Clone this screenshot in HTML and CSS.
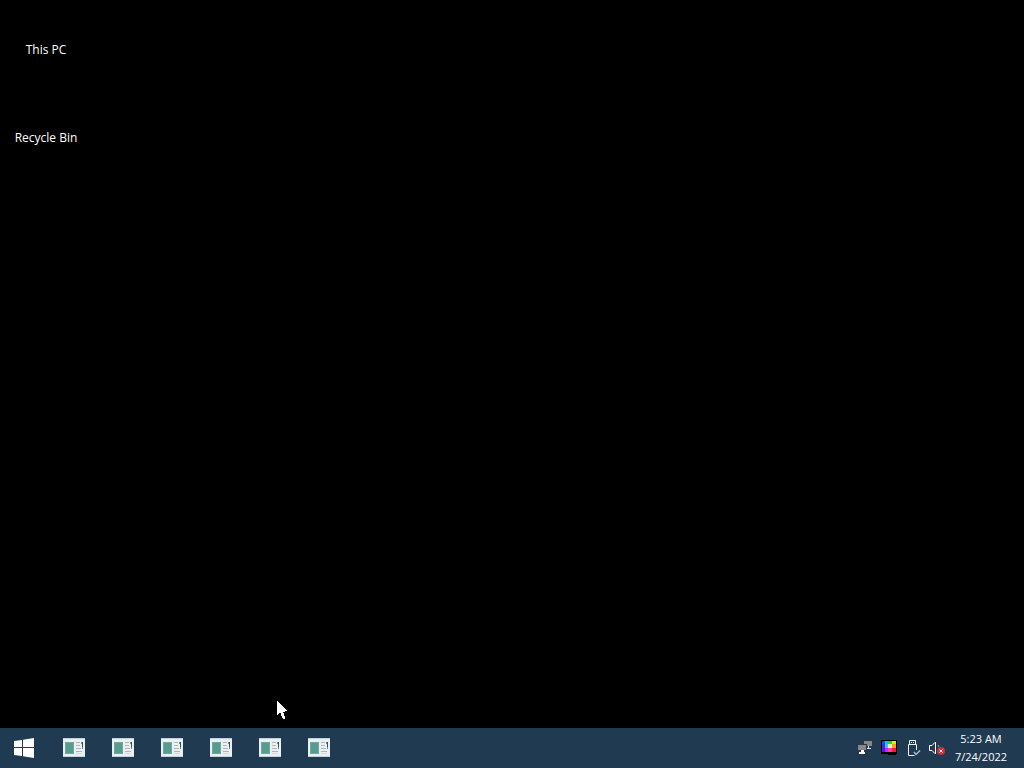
FILE: index.html
```html
<!DOCTYPE html>
<html lang="en">

<head>
    <meta charset="UTF-8">
    <meta name="viewport" content="width=device-width, initial-scale=1.0">
    <title>Desktop</title>
    <link rel="stylesheet" href="styles.css">
</head>

<body>
    <!-- Shared icon for taskbar apps -->
    <svg class="sprite" aria-hidden="true">
        <symbol id="app-icon" viewBox="0 0 22 20">
            <rect width="22" height="19" fill="#e9f0f3" />
            <rect x="0" y="0" width="22" height="1" fill="#bfd0d9" />
            <rect x="0" y="18" width="22" height="1" fill="#c6d3d9" />
            <rect x="2" y="4" width="9" height="12" fill="#76a6a4" />
            <rect x="3" y="5" width="7" height="10" fill="#559c8b" />
            <path d="M13 4.500h4M13 7.500h4M13 10.500h5M13 13.500h6" stroke="#b9b3b3" />
            <path d="M13 15.500h6" stroke="#d5d9dd" />
            <rect x="19" y="4" width="1" height="5" fill="#2f5552" />
            <rect x="18" y="4" width="1" height="2" fill="#6e8c8b" />
            <rect x="19" y="9" width="1" height="2" fill="#718b8b" />
        </symbol>
    </svg>

    <!-- Desktop -->
    <main class="desktop">
        <button class="desktop-icon">This PC</button>
        <button class="desktop-icon">Recycle Bin</button>
    </main>

    <!-- Taskbar -->
    <footer class="taskbar">
        <button class="start-btn" aria-label="Start">
            <svg width="20" height="20" viewBox="0 0 20 20" fill="#fff">
                <path d="M0 3L8 2V9H0ZM9 1.800L20 0V9H9ZM0 10H8V18L0 17ZM9 10H20V20L9 18.200Z" />
            </svg>
        </button>
        <nav class="apps" aria-label="Pinned apps">
            <button class="app-btn" aria-label="App 1"><svg width="22" height="20"><use href="#app-icon" /></svg></button>
            <button class="app-btn" aria-label="App 2"><svg width="22" height="20"><use href="#app-icon" /></svg></button>
            <button class="app-btn" aria-label="App 3"><svg width="22" height="20"><use href="#app-icon" /></svg></button>
            <button class="app-btn" aria-label="App 4"><svg width="22" height="20"><use href="#app-icon" /></svg></button>
            <button class="app-btn" aria-label="App 5"><svg width="22" height="20"><use href="#app-icon" /></svg></button>
            <button class="app-btn" aria-label="App 6"><svg width="22" height="20"><use href="#app-icon" /></svg></button>
        </nav>

        <div class="tray">
            <button class="tray-btn" aria-label="Network">
                <svg width="16" height="16" viewBox="0 0 16 16" shape-rendering="crispEdges">
                    <rect x="7" y="1" width="8" height="5" fill="#8b8583" />
                    <path d="M11 6h1v2h2v1h-4V8h1z" fill="#dce5e9" />
                    <rect x="0" y="4" width="10" height="7" fill="#203a51" />
                    <rect x="1" y="5" width="8" height="5" fill="#8b8583" />
                    <path d="M4 10h3v2h1v2H2v-2h2z" fill="#fff" />
                </svg>
            </button>
            <button class="tray-btn" aria-label="Display">
                <svg width="16" height="16" viewBox="0 0 16 16" shape-rendering="crispEdges">
                    <rect x="0" y="0" width="16" height="14" fill="#000" />
                    <path d="M7 14h8v1H7z" fill="#000" />
                    <path d="M1 1h3v3H1z" fill="#1648f0" />
                    <path d="M4 1h3v3H4z" fill="#00c8e8" />
                    <path d="M7 1h4v3H7z" fill="#18e028" />
                    <path d="M11 1h4v3h-4z" fill="#d8ee10" />
                    <path d="M1 4h3v4H1z" fill="#2038ff" />
                    <path d="M4 4h3v4H4z" fill="#58b8ff" />
                    <path d="M7 4h4v4H7z" fill="#d8ffb0" />
                    <path d="M11 4h4v4h-4z" fill="#ffa010" />
                    <path d="M1 8h3v4H1z" fill="#5a10ff" />
                    <path d="M4 8h3v4H4z" fill="#c030ff" />
                    <path d="M7 8h4v4H7z" fill="#ff3cb0" />
                    <path d="M11 8h4v4h-4z" fill="#ff1c20" />
                </svg>
            </button>
            <button class="tray-btn" aria-label="Safely remove hardware">
                <svg width="16" height="16" viewBox="0 0 16 16" fill="none">
                    <path d="M4.500 4.500V.500h6v4" stroke="#e8eef2" />
                    <path d="M6 2.500h1M8 2.500h1" stroke="#e8eef2" />
                    <path d="M11.500 10V4.500h-8v11h6" stroke="#e8eef2" />
                    <path d="M9 12l2 2.500 4-4" stroke="#a6bccc" stroke-width="1.500" />
                </svg>
            </button>
            <button class="tray-btn" aria-label="Volume muted">
                <svg width="16" height="16" viewBox="0 0 16 16" fill="none">
                    <path d="M.500 5.500H3L6.500 2v12L3 10.500H.500z" stroke="#fff" />
                    <path d="M9 5l1 2" stroke="#8fa5b4" />
                    <circle cx="12" cy="11" r="4" fill="#d12f3b" />
                    <path d="M10.500 9.500l3 3M13.500 9.500l-3 3" stroke="#fff" />
                </svg>
            </button>
        </div>

        <button class="clock">
            <time datetime="05:23">5:23 AM</time>
            <time datetime="2022-07-24">7/24/2022</time>
        </button>
    </footer>

    <!-- Mouse pointer -->
    <svg class="pointer" width="12" height="20" viewBox="0 0 12 20" aria-hidden="true">
        <path d="M0 0V15L3 12L6 19H8V17L6 12L10 11Z" fill="#fff" shape-rendering="crispEdges" />
    </svg>
</body>

</html>
```

FILE: styles.css
```css
body {
    margin: 0;
    min-height: 100vh;
    display: flex;
    flex-direction: column;
    background: #000;
    color: white;
    font-family: "Open Sans", "Noto Sans", sans-serif;
    font-size: 12px;
    overflow: hidden;
}

button {
    margin: 0;
    padding: 0;
    border: none;
    background: transparent;
    color: inherit;
    font: inherit;
}

svg {
    display: block;
}

.sprite {
    display: none;
}

/* Desktop */
.desktop {
    flex: 1;
    display: flex;
    flex-direction: column;
    align-items: flex-start;
    gap: 4px;
    padding: 7px 8px;
}

.desktop-icon {
    display: flex;
    align-items: center;
    justify-content: center;
    width: 76px;
    height: 84px;
}

/* Taskbar */
.taskbar {
    display: flex;
    align-items: stretch;
    height: 40px;
    background: #203a51;
}

.start-btn,
.app-btn {
    display: flex;
    align-items: center;
    justify-content: center;
    width: 48px;
}

.apps {
    display: flex;
    flex: 1;
    gap: 1px;
    padding-left: 2px;
}

.tray {
    display: flex;
    align-items: center;
}

.tray-btn {
    display: flex;
    align-items: center;
    justify-content: center;
    width: 24px;
    height: 24px;
}

.clock {
    display: flex;
    flex-direction: column;
    align-items: center;
    justify-content: center;
    width: 64px;
    margin-right: 11px;
    font-size: 11px;
    line-height: 18px;
}

/* Pointer floats over the desktop */
.pointer {
    position: absolute;
    left: 277px;
    top: 700px;
}
```
